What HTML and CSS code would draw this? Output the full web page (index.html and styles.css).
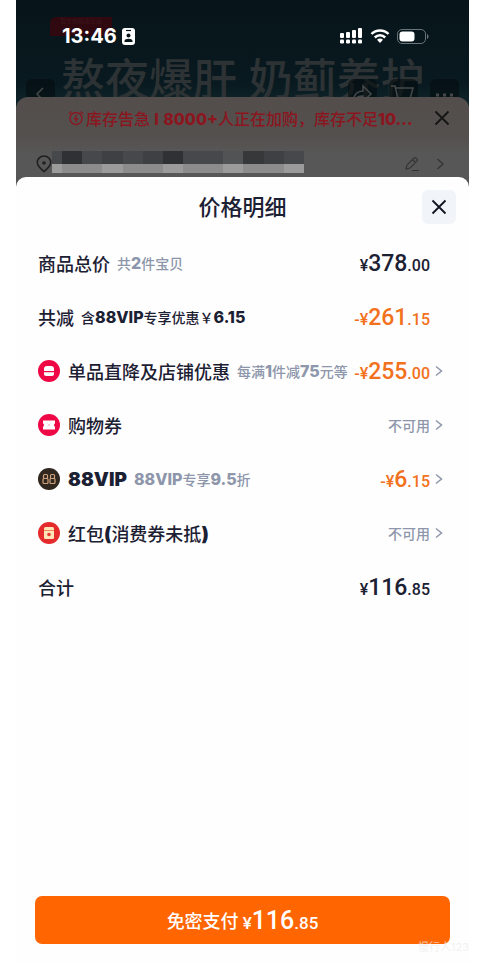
FILE: index.html
```html
<!DOCTYPE html>
<html lang="zh-CN">
<head>
<meta charset="utf-8">
<meta name="viewport" content="width=device-width, initial-scale=1">
<title>价格明细</title>
<link rel="stylesheet" href="styles.css">
</head>
<body>
<div class="phone">
  <header class="hero">
    <span class="promo">官方旗舰店正品</span>
    <div class="status">
      <span class="clock">13:46</span>
      <svg class="idcard" width="13" height="17" viewBox="0 0 13 17"><rect width="13" height="17" rx="3" fill="#fff"/><path d="M4 2.500h5" stroke="#07171c" stroke-width="1.200"/><circle cx="6.500" cy="7.500" r="2" fill="#07171c"/><path d="M2.500 14v-1c0-3 8-3 8 0v1z" fill="#07171c"/></svg>
      <span class="fill"></span>
      <svg width="24" height="16" viewBox="0 0 24 16" fill="#fff"><rect x="1" y="5" width="4" height="5" rx="1"/><rect x="7" y="4" width="4" height="6" rx="1"/><rect x="13" y="2" width="4" height="8" rx="1"/><rect x="19" y="0" width="4" height="10" rx="1"/><rect x="1" y="11.500" width="4" height="4" rx="1.200"/><rect x="7" y="11.500" width="4" height="4" rx="1.200"/><rect x="13" y="11.500" width="4" height="4" rx="1.200"/><rect x="19" y="11.500" width="4" height="4" rx="1.200"/></svg>
      <svg width="20" height="14" viewBox="0 0 20 14" fill="none" stroke="#fff" stroke-width="2.500"><path d="M1.500 5C6 .3 14 .3 18.500 5"/><path d="M4.800 8.500C7.800 5.500 12.200 5.500 15.200 8.500"/><path d="M7 10.800c1.800-1.700 4.200-1.700 6 0L10 14z" fill="#fff" stroke="none"/></svg>
      <svg width="32" height="15" viewBox="0 0 32 15"><rect x=".5" y=".5" width="28" height="14" rx="4.500" fill="none" stroke="#69757a"/><rect x="2.500" y="2.500" width="15" height="10" rx="3" fill="#fff"/><path d="M30 5c2 .8 2 4.200 0 5z" fill="#69757a"/></svg>
    </div>
    <div class="headline">熬夜爆肝 奶蓟养护</div>
    <div class="tools">
      <button class="tool" aria-label="返回"><svg width="28" height="28" viewBox="0 0 28 28"><path d="M17 8l-6 6 6 6"/></svg></button>
      <span class="fill"></span>
      <button class="tool" aria-label="分享"><svg width="28" height="28" viewBox="0 0 28 28"><path d="M5 21c1-7 4-10 10-10V6l8 8-8 7v-5c-4 0-7 1-10 5z"/></svg></button>
      <button class="tool" aria-label="购物车"><svg width="28" height="28" viewBox="0 0 28 28"><path d="M2 6h4l3 13h12l3-11H7"/></svg></button>
      <button class="tool" aria-label="更多"><svg width="28" height="28" viewBox="0 0 28 28"><path d="M6 15h3M13 15h3M20 15h3" stroke-width="3"/></svg></button>
    </div>
  </header>

  <section class="order">
    <div class="alert">
      <svg width="16" height="16" viewBox="0 0 16 16" fill="none" stroke="#8b1620" stroke-width="1.400"><circle cx="8" cy="8.500" r="6"/><path d="M1 4l2.500-2.500M15 4l-2.500-2.500M8.800 5L6.500 8.700h3L7.500 12"/></svg>
      <p class="alert-text">库存告急 <b>I</b> <b>8000+</b>人正在加购，库存不足<b>10...</b></p>
      <button class="plain" aria-label="关闭提示"><svg width="16" height="16" viewBox="0 0 16 16"><path d="M1.500 1.500l13 13M14.500 1.500l-13 13" stroke="#151515" stroke-width="1.800"/></svg></button>
    </div>
    <div class="address">
      <svg width="16" height="18" viewBox="0 0 16 18"><path d="M8 16.500c-2.500-2.500-6.700-4.800-6.700-9a6.700 6.500 0 0 1 13.400 0c0 4.200-4.200 6.500-6.700 9z" fill="none" stroke="#202022" stroke-width="1.600"/><circle cx="8" cy="8" r="1.800" fill="#202022"/></svg>
      <div class="mosaic"><i class="m4"></i><i class="m1"></i><i class="m4"></i><i class="m3"></i><i class="m4"></i><i class="m3"></i><i class="m1"></i><i class="m4"></i><i class="m4"></i><i class="m5"></i><i class="m2"></i><i class="m3"></i><i class="m4"></i></div>
      <span class="fill"></span>
      <svg class="edit" width="16" height="16" viewBox="0 0 16 16" fill="none" stroke="#343434" stroke-width="1.100"><path d="M2 13l1-4 7-7q1-1 2 0l1 1q1 1 0 2l-7 7-4 1zM8.500 3.500l3 3M8 14.500h7"/></svg>
      <svg width="9" height="14" viewBox="0 0 9 14" fill="none" stroke="#343434" stroke-width="1.300"><path d="M1.500 2l5.500 5-5.500 5"/></svg>
    </div>
  </section>

  <main class="sheet">
    <div class="sheet-head">
      <h1>价格明细</h1>
      <button class="close" aria-label="关闭"><svg width="16" height="16" viewBox="0 0 16 16"><path d="M1.500 1.500l13 13M14.500 1.500l-13 13" stroke="#111522" stroke-width="1.800"/></svg></button>
    </div>
    <ul class="rows">
      <li><span class="name">商品总价</span><span class="note">共<b>2</b>件宝贝</span><span class="price">¥<b>378</b>.00</span></li>
      <li><span class="name">共减</span><span class="note strong">含<b>88VIP</b>专享优惠￥<b>6.15</b></span><span class="price off">-¥<b>261</b>.15</span></li>
      <li><svg class="icon" width="22" height="22" viewBox="0 0 22 22"><circle cx="11" cy="11" r="11" fill="#ee0946"/><path d="M6 11V9q0-3 3-3h4q3 0 3 3v2z" fill="#fff"/><path d="M6 12.300h10V14q0 2-2 2H8q-2 0-2-2z" fill="#fff"/></svg><span class="name">单品直降及店铺优惠</span><span class="note">每满<b>1</b>件减<b>75</b>元等</span><span class="price off">-¥<b>255</b>.00</span><svg class="chev" width="8" height="12" viewBox="0 0 8 12"><path d="M1 1.500L6.500 6 1 10.500"/></svg></li>
      <li><svg class="icon" width="22" height="22" viewBox="0 0 22 22"><circle cx="11" cy="11" r="11" fill="#ee0946"/><path d="M5 6.500h12v2.700q-2 1.800 0 3.600v2.700H5v-2.700q2-1.800 0-3.600z" fill="#fff"/><path d="M9.500 9.500l3 3M12.500 9.500l-3 3" stroke="#fdd0dc"/></svg><span class="name">购物券</span><span class="state">不可用</span><svg class="chev" width="8" height="12" viewBox="0 0 8 12"><path d="M1 1.500L6.500 6 1 10.500"/></svg></li>
      <li><svg class="icon" width="22" height="22" viewBox="0 0 22 22"><circle cx="11" cy="11" r="11" fill="#30271f"/><g fill="none" stroke="#cfa27d" stroke-width="1.200"><rect x="5.500" y="6.500" width="4" height="4" rx="1"/><rect x="5" y="10.500" width="5" height="5" rx="1"/><rect x="12.500" y="6.500" width="4" height="4" rx="1"/><rect x="12" y="10.500" width="5" height="5" rx="1"/></g></svg><span class="name"><b>88VIP</b></span><span class="note"><b>88VIP</b>专享<b>9.5</b>折</span><span class="price off">-¥<b>6</b>.15</span><svg class="chev" width="8" height="12" viewBox="0 0 8 12"><path d="M1 1.500L6.500 6 1 10.500"/></svg></li>
      <li><svg class="icon" width="22" height="22" viewBox="0 0 22 22"><circle cx="11" cy="11" r="11" fill="#e52a2b"/><rect x="6" y="5" width="10" height="12" rx="1.500" fill="#ffe4ba"/><path d="M6 8.500h10" stroke="#ee8a5a"/><circle cx="11" cy="12.500" r="1.800" fill="#e9372d"/></svg><span class="name">红包<b>(</b>消费券未抵<b>)</b></span><span class="state">不可用</span><svg class="chev" width="8" height="12" viewBox="0 0 8 12"><path d="M1 1.500L6.500 6 1 10.500"/></svg></li>
      <li><span class="name">合计</span><span class="price">¥<b>116</b>.85</span></li>
    </ul>
    <button class="pay"><span>免密支付</span><span class="pay-price">¥<b>116</b>.85</span></button>
    <span class="mark">慢行人123</span>
  </main>
</div>
</body>
</html>
```
FILE: styles.css
```css
* { box-sizing: border-box; }
body {
  margin: 0;
  background: #fff;
  color: #1c2033;
  font-family: Inter, "Noto Sans CJK SC", sans-serif;
}
button { border: 0; padding: 0; background: none; font: inherit; color: inherit; }
svg { display: block; flex: none; }
.fill { flex: 1; }
.phone {
  display: flex;
  flex-direction: column;
  min-height: 100vh;
  margin: 0 14px 0 16px;
  background: #565554;
}

/* Dimmed product page */
.hero {
  position: relative;
  height: 109px;
  margin-bottom: -12px;
  overflow: hidden;
  background: linear-gradient(#07151a, #08191f 75%, #10272d);
}
.promo {
  position: absolute;
  left: 34px;
  top: 17px;
  height: 19px;
  padding: 0 10px;
  border-radius: 6px 0 6px 0;
  background: #30080f;
  color: #3d151b;
  font-size: 6px;
  line-height: 7px;
}
.status {
  position: relative;
  display: flex;
  align-items: center;
  gap: 7px;
  height: 58px;
  padding: 14px 40px 0 46px;
}
.clock { color: #fff; font-size: 20px; font-weight: 700; line-height: 20px; }
.idcard { margin-left: -2px; }
.headline {
  padding-left: 45px;
  color: #2d3234;
  font-size: 44px;
  font-weight: 500;
  line-height: 44px;
  white-space: nowrap;
}
.tools {
  position: absolute;
  inset: 79px 10px auto 10px;
  display: flex;
  gap: 12px;
}
.tool {
  width: 29px;
  height: 29px;
  border-radius: 6px;
  background: rgba(4, 12, 15, 0.6);
}
.tool svg { fill: none; stroke: #46494a; stroke-width: 1.5; }

/* Dimmed order panel */
.order {
  position: relative;
  border-radius: 12px 12px 0 0;
  background: linear-gradient(#534e4b, #54504e 40px, #575757 56px);
}
.alert {
  display: flex;
  align-items: center;
  gap: 2px;
  height: 41px;
  padding: 0 19px 0 52px;
}
.alert-text {
  flex: 1;
  min-width: 0;
  margin: 0;
  overflow: hidden;
  color: #8b1620;
  font-size: 16px;
  font-weight: 500;
  white-space: nowrap;
}
.alert-text b { font-weight: 800; }
.address {
  display: flex;
  align-items: center;
  height: 51px;
  padding: 0 24px 0 20px;
  margin-bottom: -12px;
}
.edit { margin-right: 16px; }
.mosaic { display: flex; width: 252px; height: 22px; margin-top: -4px; }
.mosaic i { flex: 2; border-bottom: 9px solid #8c8c8c; }
.mosaic i:first-child { flex: 1; }
.mosaic i:nth-child(3n+1) { border-color: #9b9b9b; }
.mosaic .m1 { background: #303134; }
.mosaic .m2 { background: #37383a; }
.mosaic .m3 { background: #3f4043; }
.mosaic .m4 { background: #47484b; }
.mosaic .m5 { background: #525355; }

/* Price sheet */
.sheet {
  position: relative;
  display: flex;
  flex: 1;
  flex-direction: column;
  padding: 0 19px 19px;
  border-radius: 10px 10px 0 0;
  background: #fefefe;
}
.sheet-head {
  display: grid;
  grid-template-columns: 28px 1fr 34px;
  align-items: center;
  height: 59px;
  margin-right: -6px;
}
h1 {
  grid-column: 2;
  margin: 0;
  padding-bottom: 4px;
  font-size: 22px;
  font-weight: 500;
  text-align: center;
}
.close {
  display: grid;
  place-items: center;
  width: 34px;
  height: 34px;
  border-radius: 6px;
  background: #f1f4f8;
}
.plain { display: grid; place-items: center; }
.rows { flex: 1; margin: 0; padding: 0 6px 0 3px; list-style: none; }
.rows li { position: relative; display: flex; align-items: center; height: 54px; padding-right: 14px; }
.icon { margin-right: 8px; }
.name { margin-right: 7px; font-size: 18px; font-weight: 500; white-space: nowrap; }
.name b { font-size: 19px; font-weight: 900; }
.note, .state { color: #8d96aa; font-size: 14px; font-weight: 500; white-space: nowrap; }
.note b { font-size: 16px; font-weight: 800; }
.note.strong { color: #1c2033; }
.price, .state { margin-left: auto; }
.price, .pay-price { font-family: Roboto, sans-serif; font-size: 16px; font-weight: 500; white-space: nowrap; }
.price b, .pay-price b { font-size: 23px; font-weight: 500; }
.off { color: #f2711c; }
.chev {
  position: absolute;
  right: 1px;
  fill: none;
  stroke: #8d96aa;
  stroke-width: 1.5;
}
.pay {
  display: flex;
  align-items: center;
  justify-content: center;
  gap: 4px;
  height: 48px;
  border-radius: 7px;
  background: #ff6500;
  color: #fff;
  font-size: 18px;
  font-weight: 500;
}
.pay-price { font-size: 17px; }
.pay-price b { font-size: 25px; }
.mark { position: absolute; right: 0; bottom: 9px; color: rgba(235, 235, 235, 0.7); font-size: 11px; }
```
